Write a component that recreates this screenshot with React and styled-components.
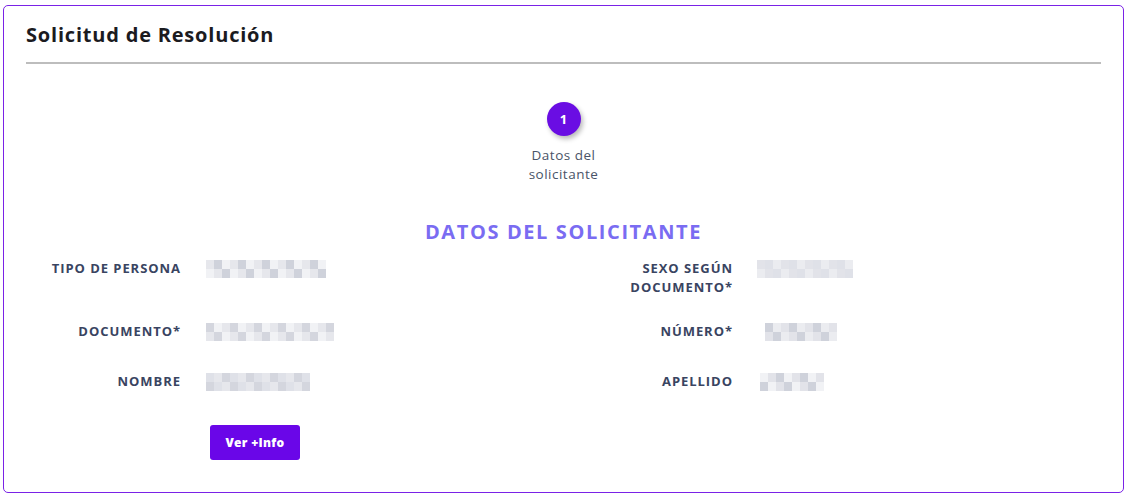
import React from 'react';
import styled, { createGlobalStyle } from 'styled-components';

const GlobalStyle = createGlobalStyle`
  html, body {
    margin: 0;
    padding: 0;
    background: #ffffff;
  }
  body {
    font-family: 'Open Sans', 'Liberation Sans', sans-serif;
    padding: 5px 4px 5px 3px;
  }
`;

const Card = styled.div`
  box-sizing: border-box;
  height: 488px;
  border: 1px solid #7a22e6;
  border-radius: 5px;
  padding: 0 22px 0 22px;
`;

const Title = styled.h1`
  margin: 0;
  padding: 16px 0 14px;
  font-size: 20px;
  font-weight: 700;
  color: #1b1b1f;
  letter-spacing: 0.8px;
  border-bottom: 2px solid #bdbdbd;
  line-height: 26px;
`;

const Stepper = styled.div`
  display: flex;
  flex-direction: column;
  align-items: center;
  padding-top: 38px;
`;

const StepCircle = styled.div`
  width: 34px;
  height: 34px;
  border-radius: 50%;
  background: #6a0de3;
  color: #fff;
  font-size: 13px;
  font-weight: 700;
  display: flex;
  align-items: center;
  justify-content: center;
  box-shadow: 2px 3px 5px rgba(0, 0, 0, 0.28);
`;

const StepLabel = styled.div`
  margin-top: 10px;
  font-size: 13.5px;
  letter-spacing: 0.5px;
  line-height: 19px;
  color: #4a5468;
  text-align: center;
`;

const SectionTitle = styled.h2`
  margin: 35px 0 0;
  text-align: center;
  font-size: 20px;
  font-weight: 700;
  color: #7a6cf2;
  letter-spacing: 1.6px;
  line-height: 26px;
`;

const Grid = styled.div`
  display: grid;
  grid-template-columns: 155px 382px 170px 1fr;
  grid-template-rows: 62.5px 50px auto;
  align-items: start;
  margin-top: 14px;
`;

const Label = styled.div`
  text-align: right;
  font-size: 13px;
  font-weight: 700;
  line-height: 19px;
  letter-spacing: 0.95px;
  color: #394461;
  text-transform: uppercase;
`;

const Value = styled.div`
  padding-left: ${(p) => p.$pad || 25}px;
  padding-top: 1px;
`;

const Blur = styled.div`
  display: grid;
  grid-auto-flow: column;
  grid-template-rows: 9px 9px;
  grid-auto-columns: 8px;
  width: max-content;
`;

const Cell = styled.span`
  display: block;
  background: ${(p) => p.$c};
`;

const Footer = styled.div`
  padding: 34px 0 0 184px;
`;

const Button = styled.button`
  width: 90px;
  height: 35px;
  border: none;
  border-radius: 3px;
  background: #6a06e8;
  color: #fff;
  font-family: inherit;
  font-size: 12px;
  font-weight: 800;
  letter-spacing: 0.3px;
  cursor: pointer;
`;

const shades = ['#ebecf0', '#dfe1e8', '#d4d6de', '#e6e7ec', '#f1f2f5', '#cfd2db', '#e2e3e9'];

const Pixelated = ({ cols, seed }) => {
  const cells = [];
  for (let i = 0; i < cols * 2; i++) {
    const c = shades[(i * 7 + seed * 3 + (i % 3)) % shades.length];
    cells.push(<Cell key={i} $c={c} />);
  }
  return <Blur>{cells}</Blur>;
};

export default function App() {
  return (
    <>
      <GlobalStyle />
      <Card>
        <Title>Solicitud de Resolución</Title>
        <Stepper>
          <StepCircle>1</StepCircle>
          <StepLabel>
            Datos del
            <br />
            solicitante
          </StepLabel>
        </Stepper>
        <SectionTitle>DATOS DEL SOLICITANTE</SectionTitle>
        <Grid>
          <Label>Tipo de persona</Label>
          <Value><Pixelated cols={15} seed={1} /></Value>
          <Label>
            Sexo según
            <br />
            documento*
          </Label>
          <Value $pad={24}><Pixelated cols={12} seed={2} /></Value>

          <Label>Documento*</Label>
          <Value><Pixelated cols={16} seed={3} /></Value>
          <Label>Número*</Label>
          <Value $pad={32}><Pixelated cols={9} seed={4} /></Value>

          <Label>Nombre</Label>
          <Value><Pixelated cols={13} seed={5} /></Value>
          <Label>Apellido</Label>
          <Value $pad={27}><Pixelated cols={8} seed={6} /></Value>
        </Grid>
        <Footer>
          <Button>Ver +Info</Button>
        </Footer>
      </Card>
    </>
  );
}
